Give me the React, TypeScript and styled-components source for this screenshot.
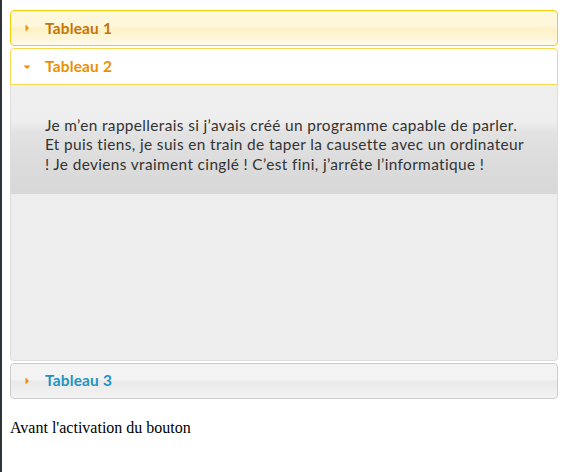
import React from "react";
import styled, { createGlobalStyle, css } from "styled-components";

const GlobalStyle = createGlobalStyle`
  html {
    background: linear-gradient(to right, #2f3438 0, #2f3438 2px, #ffffff 2px);
    min-height: 100%;
  }
  body {
    margin: 8px 8px 8px 10px;
    font-family: "Liberation Serif", serif;
    font-size: 16px;
    color: #000;
  }
`;

type HeaderState = "hover" | "active" | "default";

const Accordion = styled.div`
  font-family: Lato, "Open Sans", sans-serif;
  font-size: 15.4px;
`;

const headerStates = {
  hover: css`
    border-color: #fbcb09;
    color: #c77405;
    background: linear-gradient(
      to bottom,
      #fef8de 0%,
      #fef7da 46%,
      #fdf1c4 50%,
      #fdf4d2 70%,
      #fefaea 100%
    );
    border-radius: 4px;
  `,
  active: css`
    border-color: #fbd850;
    color: #eb8f00;
    background: #ffffff;
    border-radius: 4px 4px 0 0;
  `,
  default: css`
    border-color: #cccccc;
    color: #1c94c4;
    background: linear-gradient(
      to bottom,
      #f4f4f4 0%,
      #f3f3f3 46%,
      #e9e9e9 52%,
      #eeeeee 75%,
      #f3f3f3 100%
    );
    border-radius: 4px;
  `,
};

const Header = styled.h3<{ $state: HeaderState }>`
  display: flex;
  align-items: center;
  gap: 10.3px;
  margin: 2px 0 0;
  padding: 7.7px 7.7px 7.7px 7.7px;
  border: 1px solid;
  font-size: 15.4px;
  font-weight: bold;
  line-height: 19px;
  letter-spacing: 0.2px;
  cursor: pointer;
  ${(p) => headerStates[p.$state]}
`;

const IconBox = styled.span`
  display: flex;
  width: 16px;
  height: 16px;
  flex: none;
`;

const Panel = styled.div`
  box-sizing: border-box;
  height: 276px;
  padding: 15.4px 33.9px;
  border: 1px solid #dddddd;
  border-top: 0;
  border-radius: 0 0 4px 4px;
  color: #333333;
  background: linear-gradient(
    to bottom,
    #efefef 0px,
    #eeeeee 36px,
    #e2e2e2 48px,
    #dbdbdb 82px,
    #d8d8d8 109px,
    #eeeeee 109px
  );
`;

const PanelText = styled.p`
  margin: 15.4px 0;
  line-height: 19.5px;
  letter-spacing: 0.37px;
  white-space: nowrap;
`;

const Note = styled.p`
  margin: 20px 0 16px;
`;

const Triangle = ({ open }: { open: boolean }) => (
  <IconBox>
    <svg width="16" height="16" viewBox="0 0 16 16">
      {open ? (
        <polygon points="4.5,6.5 11.5,6.5 8,10" fill="#ef8c08" />
      ) : (
        <polygon points="6.5,4.5 10,8 6.5,11.5" fill="#ef8c08" />
      )}
    </svg>
  </IconBox>
);

export default function App() {
  return (
    <>
      <GlobalStyle />
      <Accordion>
        <Header $state="hover">
          <Triangle open={false} />
          Tableau 1
        </Header>
        <Header $state="active">
          <Triangle open={true} />
          Tableau 2
        </Header>
        <Panel>
          <PanelText>
            Je m’en rappellerais si j’avais créé un programme capable de parler.
            <br />
            Et puis tiens, je suis en train de taper la causette avec un ordinateur
            <br />! Je deviens vraiment cinglé ! C’est fini, j’arrête l’informatique !
          </PanelText>
        </Panel>
        <Header $state="default">
          <Triangle open={false} />
          Tableau 3
        </Header>
      </Accordion>
      <Note>Avant l'activation du bouton</Note>
    </>
  );
}
